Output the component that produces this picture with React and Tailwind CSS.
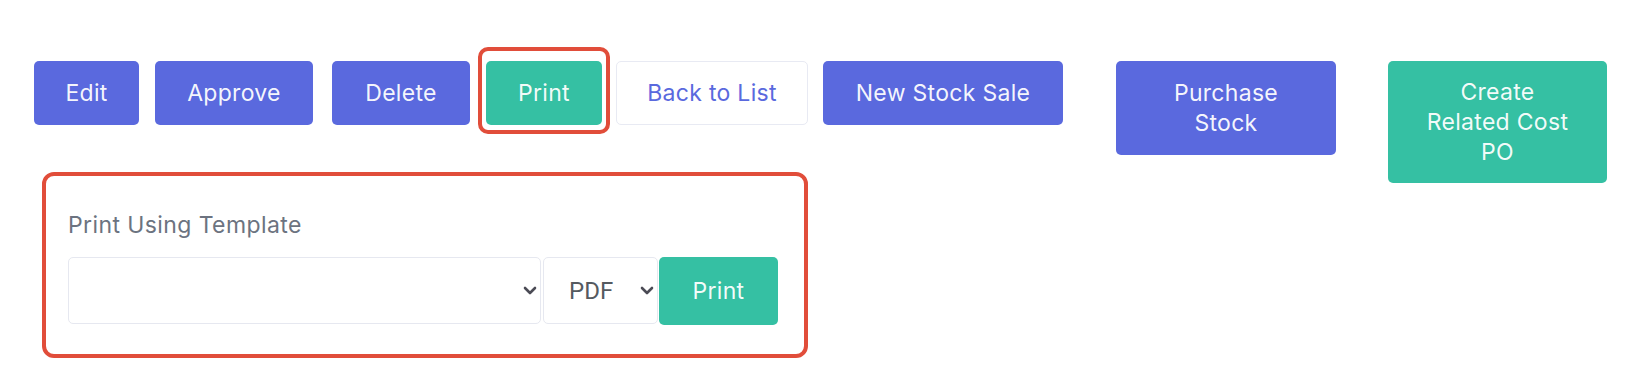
import React from "react";

function Chevron() {
  return (
    <svg width="14" height="9" viewBox="0 0 14 9" fill="none">
      <path d="M2 2 L7 7 L12 2" stroke="#4b4b55" strokeWidth="2.6" strokeLinecap="round" strokeLinejoin="round" />
    </svg>
  );
}

export default function App() {
  return (
    <div className="min-h-[377px] w-full bg-white pt-[61px] pl-[34px] font-['Inter',sans-serif] text-[23px] leading-[30px] font-normal tracking-[0.3px]">
      <div className="flex items-start">
        <div className="flex flex-col items-start">
          <div className="flex items-start">
            <button className="w-[105px] rounded-[5px] bg-[#5a69de] py-[17px] text-center text-white/95">Edit</button>
            <button className="ml-[16px] w-[158px] rounded-[5px] bg-[#5a69de] py-[17px] text-center text-white/95">Approve</button>
            <button className="ml-[19px] w-[138px] rounded-[5px] bg-[#5a69de] py-[17px] text-center text-white/95">Delete</button>
            <div className="relative ml-[16px]">
              <button className="w-[116px] rounded-[5px] bg-[#35c0a3] py-[17px] text-center text-white/95">Print</button>
              <span className="pointer-events-none absolute -left-[8px] -right-[8px] -top-[14px] -bottom-[9px] rounded-[10px] border-4 border-[#e14d3a]"></span>
            </div>
            <button className="ml-[14px] box-border w-[192px] rounded-[5px] border border-[#e8eaf3] bg-white py-[16px] text-center text-[#5a69de]">Back to List</button>
            <button className="ml-[15px] w-[240px] rounded-[5px] bg-[#5a69de] py-[17px] text-center text-white/95">New Stock Sale</button>
          </div>

          <div className="ml-[8px] mt-[47px] box-border h-[186px] w-[766px] rounded-[12px] border-4 border-[#e14d3a] bg-white pl-[22px] pt-[34px]">
            <div className="text-[23px] leading-[30px] tracking-[0.4px] text-[#6c7380]">Print Using Template</div>
            <div className="mt-[17px] flex items-stretch">
              <div className="box-border flex h-[67px] w-[473px] items-center justify-end rounded-[5px] border border-[#e6e8f0] bg-white pr-[3px]">
                <Chevron />
              </div>
              <div className="ml-[2px] box-border flex h-[67px] w-[115px] items-center justify-between rounded-[5px] border border-[#e6e8f0] bg-white pl-[25px] pr-[3px]">
                <span className="font-['Roboto',sans-serif] text-[24px] tracking-normal text-[#555a60]">PDF</span>
                <Chevron />
              </div>
              <button className="ml-[1px] h-[68px] w-[119px] rounded-[5px] bg-[#35c0a3] text-center text-white/95">Print</button>
            </div>
          </div>
        </div>

        <button className="ml-[53px] w-[220px] rounded-[5px] bg-[#5a69de] py-[17px] text-center text-white/95">
          Purchase<br />Stock
        </button>
        <button className="ml-[52px] w-[219px] rounded-[5px] bg-[#35c0a3] py-[16px] text-center text-white/95">
          Create<br />Related Cost<br />PO
        </button>
      </div>
    </div>
  );
}
